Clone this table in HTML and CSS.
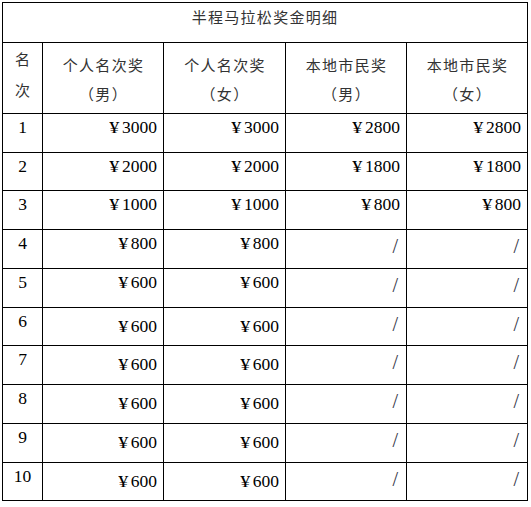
FILE: index.html
```html
<!DOCTYPE html>
<html lang="zh-CN">
<head>
<meta charset="utf-8">
<title>半程马拉松奖金明细</title>
<link rel="stylesheet" href="styles.css">
</head>
<body>
<div class="page">
<table class="prize">
  <colgroup>
    <col class="c-rank">
    <col class="c-a">
    <col class="c-b">
    <col class="c-c">
    <col class="c-d">
  </colgroup>
  <tr class="r-title"><td colspan="5" class="title">半程马拉松奖金明细</td></tr>
  <tr class="r-head">
    <td class="h-rank">名<br>次</td>
    <td class="head">个人名次奖<br>（男）</td>
    <td class="head">个人名次奖<br>（女）</td>
    <td class="head">本地市民奖<br>（男）</td>
    <td class="head">本地市民奖<br>（女）</td>
  </tr>
  <tr class="r39"><td class="rank">1</td><td class="amt"><span class="yen">¥</span>3000</td><td class="amt"><span class="yen">¥</span>3000</td><td class="amt"><span class="yen">¥</span>2800</td><td class="amt"><span class="yen">¥</span>2800</td></tr>
  <tr class="r38"><td class="rank">2</td><td class="amt"><span class="yen">¥</span>2000</td><td class="amt"><span class="yen">¥</span>2000</td><td class="amt"><span class="yen">¥</span>1800</td><td class="amt"><span class="yen">¥</span>1800</td></tr>
  <tr class="r39"><td class="rank">3</td><td class="amt"><span class="yen">¥</span>1000</td><td class="amt"><span class="yen">¥</span>1000</td><td class="amt"><span class="yen">¥</span>800</td><td class="amt"><span class="yen">¥</span>800</td></tr>
  <tr class="r39"><td class="rank">4</td><td class="amt"><span class="yen">¥</span>800</td><td class="amt"><span class="yen">¥</span>800</td><td class="none">/</td><td class="none">/</td></tr>
  <tr class="r39"><td class="rank">5</td><td class="amt"><span class="yen">¥</span>600</td><td class="amt"><span class="yen">¥</span>600</td><td class="none">/</td><td class="none">/</td></tr>
  <tr class="r38"><td class="rank">6</td><td class="amt low"><span class="yen">¥</span>600</td><td class="amt low"><span class="yen">¥</span>600</td><td class="none">/</td><td class="none">/</td></tr>
  <tr class="r39"><td class="rank">7</td><td class="amt low"><span class="yen">¥</span>600</td><td class="amt low"><span class="yen">¥</span>600</td><td class="none">/</td><td class="none">/</td></tr>
  <tr class="r39"><td class="rank">8</td><td class="amt low"><span class="yen">¥</span>600</td><td class="amt low"><span class="yen">¥</span>600</td><td class="none">/</td><td class="none">/</td></tr>
  <tr class="r39"><td class="rank">9</td><td class="amt low"><span class="yen">¥</span>600</td><td class="amt low"><span class="yen">¥</span>600</td><td class="none">/</td><td class="none">/</td></tr>
  <tr class="r38"><td class="rank">10</td><td class="amt low"><span class="yen">¥</span>600</td><td class="amt low"><span class="yen">¥</span>600</td><td class="none">/</td><td class="none">/</td></tr>
</table>
</div>
</body>
</html>
```
FILE: styles.css
```css
html, body {
  margin: 0;
  padding: 0;
  background: #fff;
}
.page {
  padding: 2px 0 0 2px;
}
.prize {
  border-collapse: collapse;
  table-layout: fixed;
  width: 525px;
  font-family: "Liberation Serif", "Noto Sans CJK SC", serif;
  color: #000;
}
.c-rank { width: 40px; }
.c-a { width: 121px; }
.c-b { width: 122px; }
.c-c { width: 121px; }
.c-d { width: 121px; }
.prize td {
  border: 1px solid #000;
  padding: 0;
  vertical-align: top;
}
.r-title { height: 40px; }
.r-head { height: 71px; }
.r39 { height: 39px; }
.r38 { height: 38px; }
.prize .title,
.prize .head,
.prize .h-rank {
  font-family: "Noto Sans CJK SC", sans-serif;
  font-size: 15px;
  letter-spacing: 1.3px;
  color: #333;
  text-align: center;
}
.prize .title {
  line-height: 26px;
  padding-top: 1px;
}
.prize .head {
  line-height: 29px;
  padding-top: 7px;
  padding-left: 1px;
}
.prize .h-rank {
  line-height: 31px;
  padding-top: 0;
  letter-spacing: 0;
}
.prize .rank {
  font-size: 17.5px;
  line-height: 20px;
  padding-top: 3px;
  text-align: center;
}
.prize .amt {
  font-size: 17.5px;
  line-height: 20px;
  padding: 3px 6px 0 0;
  text-align: right;
}
.prize .amt.low {
  padding-top: 8px;
}
.yen {
  display: inline-block;
  transform: scaleX(1.15);
  margin-right: 3px;
}
.prize .none {
  font-size: 20px;
  line-height: 22px;
  padding: 5px 8px 0 0;
  text-align: right;
  color: #334;
}
```
